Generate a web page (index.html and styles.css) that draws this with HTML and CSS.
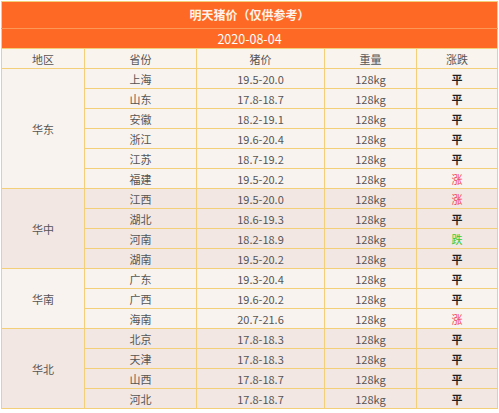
FILE: index.html
```html
<!DOCTYPE html>
<html lang="zh-CN">
<head>
<meta charset="utf-8">
<title>明天猪价</title>
<link rel="stylesheet" href="styles.css">
</head>
<body>
<table class="price">
  <colgroup>
    <col class="c1"><col class="c2"><col class="c3"><col class="c4"><col class="c5">
  </colgroup>
  <thead>
    <tr class="title"><th colspan="5">明天猪价（仅供参考）</th></tr>
    <tr class="date"><th colspan="5">2020-08-04</th></tr>
    <tr class="head"><th>地区</th><th>省份</th><th>猪价</th><th>重量</th><th>涨跌</th></tr>
  </thead>
  <tbody class="g-light">
    <tr><td rowspan="6" class="region">华东</td><td>上海</td><td>19.5-20.0</td><td>128kg</td><td class="flat">平</td></tr>
    <tr><td>山东</td><td>17.8-18.7</td><td>128kg</td><td class="flat">平</td></tr>
    <tr><td>安徽</td><td>18.2-19.1</td><td>128kg</td><td class="flat">平</td></tr>
    <tr><td>浙江</td><td>19.6-20.4</td><td>128kg</td><td class="flat">平</td></tr>
    <tr><td>江苏</td><td>18.7-19.2</td><td>128kg</td><td class="flat">平</td></tr>
    <tr><td>福建</td><td>19.5-20.2</td><td>128kg</td><td class="up">涨</td></tr>
  </tbody>
  <tbody class="g-dark">
    <tr><td rowspan="4" class="region">华中</td><td>江西</td><td>19.5-20.0</td><td>128kg</td><td class="up">涨</td></tr>
    <tr><td>湖北</td><td>18.6-19.3</td><td>128kg</td><td class="flat">平</td></tr>
    <tr><td>河南</td><td>18.2-18.9</td><td>128kg</td><td class="down">跌</td></tr>
    <tr><td>湖南</td><td>19.5-20.2</td><td>128kg</td><td class="flat">平</td></tr>
  </tbody>
  <tbody class="g-light">
    <tr><td rowspan="3" class="region">华南</td><td>广东</td><td>19.3-20.4</td><td>128kg</td><td class="flat">平</td></tr>
    <tr><td>广西</td><td>19.6-20.2</td><td>128kg</td><td class="flat">平</td></tr>
    <tr><td>海南</td><td>20.7-21.6</td><td>128kg</td><td class="up">涨</td></tr>
  </tbody>
  <tbody class="g-dark">
    <tr><td rowspan="4" class="region">华北</td><td>北京</td><td>17.8-18.3</td><td>128kg</td><td class="flat">平</td></tr>
    <tr><td>天津</td><td>17.8-18.3</td><td>128kg</td><td class="flat">平</td></tr>
    <tr><td>山西</td><td>17.8-18.7</td><td>128kg</td><td class="flat">平</td></tr>
    <tr><td>河北</td><td>17.8-18.7</td><td>128kg</td><td class="flat">平</td></tr>
  </tbody>
</table>
</body>
</html>
```
FILE: styles.css
```css
html, body {
  margin: 0;
  padding: 0;
  background: #ffffff;
}
body {
  padding: 1px 0 0 1px;
  font-family: "Noto Sans CJK SC", "Noto Sans", sans-serif;
  font-size: 11px;
  color: #555555;
}
.price {
  border-collapse: collapse;
  table-layout: fixed;
  width: 496px;
}
.c1 { width: 83px; }
.c2 { width: 112px; }
.c3 { width: 128px; }
.c4 { width: 92px; }
.c5 { width: 81px; }
.price th, .price td {
  border: 1px solid #f4cf7a;
  padding: 0;
  text-align: center;
  vertical-align: middle;
  font-weight: normal;
  line-height: 14px;
}
.price td { height: 19px; }
.price .title th {
  background: #fe6a26;
  color: #fff3ea;
  font-weight: bold;
  font-size: 12px;
  height: 26px;
  border-bottom-color: #fb9858;
}
.price .date th {
  background: #fe6a26;
  color: #ffffff;
  font-size: 12.5px;
  height: 19px;
  border-top-color: #fb9858;
}
.price .head th {
  background: #faf4ef;
  height: 19px;
}
.g-light td { background: #f9f3ef; }
.g-dark td { background: #f2e7e3; }
.price td.flat { color: #1e1e1e; font-weight: bold; }
.price td.up { color: #f0405a; }
.price td.down { color: #2fcc37; }
```
